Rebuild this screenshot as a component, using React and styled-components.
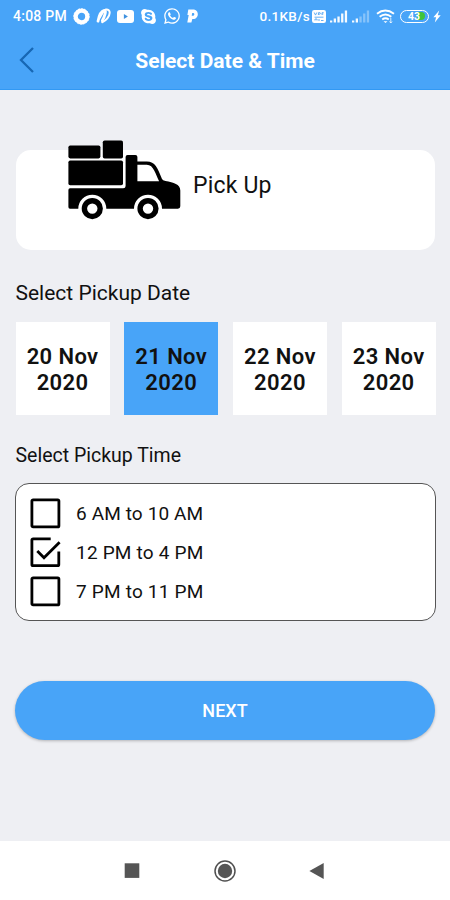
import React, { useState } from 'react';
import styled, { createGlobalStyle } from 'styled-components';
import { FaSkype, FaWhatsapp } from 'react-icons/fa';

const dates = ['20 Nov', '21 Nov', '22 Nov', '23 Nov'];
const times = [
  { label: '6 AM to 10 AM', spacing: '0.12px' },
  { label: '12 PM to 4 PM', spacing: '0.2px' },
  { label: '7 PM to 11 PM', spacing: '0.2px' },
];

const SignalIcon = ({ strength }) => (
  <svg width='18' height='13' viewBox='0 0 18 13' fill='#fff'>
    {[2, 4, 6, 9, 12].map((h, i) => (
      <rect
        key={h}
        x={i * 3.7}
        y={12.5 - h}
        width='2.3'
        height={h}
        opacity={i < strength ? 0.95 : 0.35}
      />
    ))}
  </svg>
);

const StatusBar = () => (
  <Status>
    <Clock>4:08 PM</Clock>
    <AppIcons>
      <svg width='17' height='17' viewBox='0 0 17 17'>
        <circle cx='8.5' cy='8.5' r='5.8' fill='none' stroke='#fff' strokeWidth='4.2' />
        <circle cx='8.5' cy='8.5' r='7.8' fill='none' stroke='#fff' strokeWidth='.8' strokeDasharray='2 1' />
      </svg>
      <svg width='15' height='16' viewBox='0 0 15 16' fill='none' stroke='#fff' strokeLinecap='round'>
        <path d='M2 13.2C2.8 8.6 5 3 8.3 2.3c2.6-.3.2 6.4-2 10.4' strokeWidth='2.8' />
        <path d='M3.2 10.5L7 4' strokeWidth='2.2' />
        <path d='M6.2 14.2c3.8-1.4 7.4-5.6 7.5-9.4.1-2.3-1.4-3.6-3.8-3.4' strokeWidth='2' />
      </svg>
      <svg width='17' height='13' viewBox='0 0 17 13'>
        <rect width='17' height='13' rx='3' fill='#fff' />
        <path d='M6.9 4.1v4.8l4-2.4z' fill='#3e91df' />
      </svg>
      <FaSkype size={17} />
      <FaWhatsapp size={18} />
      <svg width='11' height='14' viewBox='0 0 11 14'>
        <path
          fill='#fff'
          fillRule='evenodd'
          d='M1.3.6H6C12.6.6 12.2 10 6 10H5.3L4.4 13.6H.3L1.7 6H.4zM5.2 3.9L4.7 6.7h1c2 0 2.2-2.8.4-2.8z'
        />
      </svg>
    </AppIcons>
    <Speed>0.1KB/s</Speed>
    <SystemIcons>
      <svg width='14' height='13' viewBox='0 0 14 13'>
        <rect width='14' height='13' rx='2.2' fill='#fff' />
        <path d='M2.2 2.5l1.3 2.6 1.3-2.6M6.4 5V2.7h1.7q1 .6 0 1.4H6.4M10 5V2.7h1.7M10 4h1.3M2.5 7.2h9M3 10.5V9h2v1.5M7 9v2M9 10.5h2.5' stroke='#53a7f4' fill='none' strokeWidth='.9' />
      </svg>
      <SignalIcon strength={5} />
      <SignalIcon strength={2} />
      <WifiSvg viewBox='0 0 19 15' fill='none' stroke='#fff' strokeWidth='1.9'>
        <path d='M1 4.8q8.2-6.5 17 0M3.6 7.8q5.9-4.6 11.7 0M6.2 10.5q3.3-2.4 6.6 0' />
        <path d='M7.5 12.3h4L9.5 14z' fill='#fff' stroke='none' />
        <path d='M14.8 8.8v5.2m-1.3-1.5l1.3 1.5 1.3-1.5' strokeWidth='.8' />
      </WifiSvg>
      <Battery>
        <BatteryFill />
        <BatteryText>43</BatteryText>
      </Battery>
      <svg width='8' height='13' viewBox='0 0 8 13' fill='#fff'>
        <path d='M6.2.4L.4 7.2h2.7L1.8 12.6 7.7 5.3H4.8z' />
      </svg>
    </SystemIcons>
  </Status>
);

const Truck = () => (
  <TruckSvg viewBox='0 0 113 80'>
    <rect x='.4' y='5.4' width='32' height='13' rx='1.8' />
    <rect x='34.8' y='.5' width='20.2' height='18' rx='1.8' />
    <rect x='.4' y='20.5' width='54.6' height='24.8' rx='1.8' />
    <path
      fillRule='evenodd'
      d='M2 48.3h53.2q2.4 0 2.4-2.4V17q0-2 2-2h7.8q2 0 2 2v4.4h9.4c8.4 0 10.6 6.2 15.2 17.6q.7 1.5 3.5 2c8 1.6 14.8 3 14.8 9.5v15.8q0 2.4-2.4 2.4H94a14 14 0 0 0-28 0H38.3a14 14 0 0 0-28 0H2q-1.6 0-1.6-1.6V49.9Q.4 48.3 2 48.3zM69.4 24.7v16.5h21.7c-3.5-7-5.4-16.5-12.3-16.5z'
    />
    <circle cx='24.3' cy='68.6' r='7.9' fill='none' stroke='#000' strokeWidth='5.4' />
    <circle cx='80' cy='68.6' r='7.9' fill='none' stroke='#000' strokeWidth='5.4' />
  </TruckSvg>
);

const CheckIcon = ({ checked }) => (
  <svg width='31' height='31' viewBox='0 0 31 31' fill='none' stroke='#000' strokeWidth='2.8'>
    {checked ? (
      <>
        <path d='M20.7 1.9H3.1Q1.9 1.9 1.9 3.1v24.4q0 1.2 1.2 1.2h24.5q1.2 0 1.2-1.2V14.5' />
        <path d='M7.3 14l6.7 6.8L29.6 5.2' />
      </>
    ) : (
      <rect x='1.9' y='1.9' width='27' height='27' rx='1.2' />
    )}
  </svg>
);

const App = () => {
  const [date, setDate] = useState('21 Nov');
  const [time, setTime] = useState('12 PM to 4 PM');

  return (
    <Screen>
      <GlobalStyle />
      <StatusBar />
      <Header>
        <BackButton aria-label='Back'>
          <svg width='16' height='26' viewBox='0 0 16 26' fill='none' stroke='#1767b4' strokeWidth='2.3'>
            <path d='M14 1L2 13l12 12' />
          </svg>
        </BackButton>
        <Title>Select Date &amp; Time</Title>
      </Header>
      <Content>
        <PickUpCard>
          <Truck />
          <PickUpText>Pick Up</PickUpText>
        </PickUpCard>
        <DateLabel>Select Pickup Date</DateLabel>
        <DateGrid>
          {dates.map((day) => (
            <DateTile key={day} $active={day === date} onClick={() => setDate(day)}>
              <span>{day}</span>
              <span>2020</span>
            </DateTile>
          ))}
        </DateGrid>
        <TimeLabel>Select Pickup Time</TimeLabel>
        <TimeBox>
          {times.map(({ label, spacing }) => (
            <TimeRow key={label} $spacing={spacing} onClick={() => setTime(label)}>
              <CheckIcon checked={label === time} />
              <span>{label}</span>
            </TimeRow>
          ))}
        </TimeBox>
        <NextButton>NEXT</NextButton>
      </Content>
      <NavBar>
        <svg width='24' height='24' viewBox='0 0 24 24'>
          <rect x='4.7' y='4.3' width='14.6' height='14.6' fill='#555' />
        </svg>
        <svg width='24' height='24' viewBox='0 0 24 24'>
          <circle cx='12' cy='12' r='10' fill='none' stroke='#505050' strokeWidth='1.5' />
          <circle cx='12' cy='12' r='7.2' fill='#555' />
        </svg>
        <svg width='24' height='24' viewBox='0 0 24 24'>
          <path d='M3.4 12L17.7 4v16z' fill='#555' />
        </svg>
      </NavBar>
    </Screen>
  );
};

const GlobalStyle = createGlobalStyle`
  * {
    box-sizing: border-box;
  }
  body {
    margin: 0;
    font-family: Roboto, sans-serif;
    color: #111;
  }
  button {
    font-family: inherit;
    border: 0;
    padding: 0;
    color: inherit;
  }
  svg {
    display: block;
    flex-shrink: 0;
  }
`;

const Screen = styled.div`
  width: 450px;
  height: 900px;
  display: flex;
  flex-direction: column;
  overflow: hidden;
  background: #eeeff3;
`;

const Status = styled.div`
  height: 32px;
  display: flex;
  align-items: center;
  padding: 0 9px 0 13px;
  background: #48a4f8;
  color: #fff;
`;

const Clock = styled.span`
  width: 60px;
  font-size: 14px;
  font-weight: 500;
  letter-spacing: 0.25px;
  white-space: nowrap;
`;

const AppIcons = styled.div`
  display: flex;
  align-items: center;
  gap: 6px;
`;

const Speed = styled.span`
  margin-left: auto;
  font-size: 13.5px;
  font-weight: 500;
  letter-spacing: 0.3px;
`;

const SystemIcons = styled.div`
  display: flex;
  align-items: center;
  gap: 4px;
  margin-left: 2px;
`;

const WifiSvg = styled.svg`
  width: 19px;
  height: 15px;
  margin-left: 2px;
`;

const Battery = styled.div`
  width: 29px;
  height: 13px;
  margin-left: 1px;
  display: grid;
  grid-template: 10px / 26px;
  border: 1.5px solid #fff;
  border-radius: 7px;
  overflow: hidden;
`;

const BatteryFill = styled.div`
  grid-area: 1 / 1;
  width: 8px;
  height: 8px;
  margin: 1px 0 0 16px;
  border-radius: 0 4px 4px 0;
  background: #3fc43b;
`;

const BatteryText = styled.span`
  grid-area: 1 / 1;
  place-self: center;
  padding-top: 1px;
  font-size: 10.5px;
  line-height: 11px;
  font-weight: 700;
`;

const Header = styled.header`
  height: 58px;
  display: grid;
  grid-template-columns: 40px 1fr 40px;
  align-items: center;
  background: #48a4f8;
  border-bottom: 1px solid #3299f4;
  color: #fff;
`;

const BackButton = styled.button`
  padding: 0 0 1px 19px;
  background: none;
`;

const Title = styled.h1`
  margin: 0;
  padding-top: 1px;
  font-size: 21px;
  font-weight: 700;
  text-align: center;
`;

const Content = styled.main`
  flex: 1;
  display: flex;
  flex-direction: column;
  padding: 60px 15px 0;
`;

const PickUpCard = styled.section`
  height: 100px;
  display: flex;
  margin: 0 0 0 1px;
  padding-left: 52px;
  border-radius: 15px;
  background: #fff;
`;

const TruckSvg = styled.svg`
  width: 113px;
  height: 80px;
  margin-top: -10px;
`;

const PickUpText = styled.span`
  margin: 22px 0 0 12px;
  font-size: 23px;
  line-height: 28px;
  letter-spacing: 0.2px;
`;

const Label = styled.h2`
  margin: 0;
  padding-left: 0.5px;
  font-weight: 400;
  line-height: 26px;
`;

const DateLabel = styled(Label)`
  margin-top: 30px;
  font-size: 21px;
`;

const DateGrid = styled.div`
  display: grid;
  grid-template-columns: repeat(4, 94px);
  justify-content: space-between;
  margin: 16px -0.7px 0 0.6px;
`;

const DateTile = styled.button`
  height: 93px;
  display: flex;
  flex-direction: column;
  align-items: center;
  justify-content: center;
  padding-top: 3px;
  background: ${({ $active }) => ($active ? '#48a4f8' : '#fff')};
  font-size: 22px;
  line-height: 26px;
  font-weight: 600;
  letter-spacing: 0.4px;
`;

const TimeLabel = styled(Label)`
  margin-top: 28px;
  font-size: 19.5px;
`;

const TimeBox = styled.section`
  height: 138px;
  display: flex;
  flex-direction: column;
  gap: 8px;
  margin: 14px -0.5px 0 0;
  padding: 13.5px 14px;
  border: 1px solid #555;
  border-radius: 14px;
  background: #fff;
`;

const TimeRow = styled.button`
  display: flex;
  align-items: center;
  gap: 15px;
  background: none;
  font-size: 19px;
  letter-spacing: ${({ $spacing }) => $spacing};
  span {
    padding-top: 1px;
  }
`;

const NextButton = styled.button`
  height: 59px;
  margin-top: 60px;
  border-radius: 30px;
  background: #48a4f8;
  box-shadow: 0 1px 3px rgba(0, 0, 0, 0.25);
  color: #fff;
  font-size: 18px;
  font-weight: 500;
`;

const NavBar = styled.nav`
  height: 59px;
  display: flex;
  align-items: center;
  justify-content: center;
  gap: 69px;
  background: #fff;
`;

export default App;
